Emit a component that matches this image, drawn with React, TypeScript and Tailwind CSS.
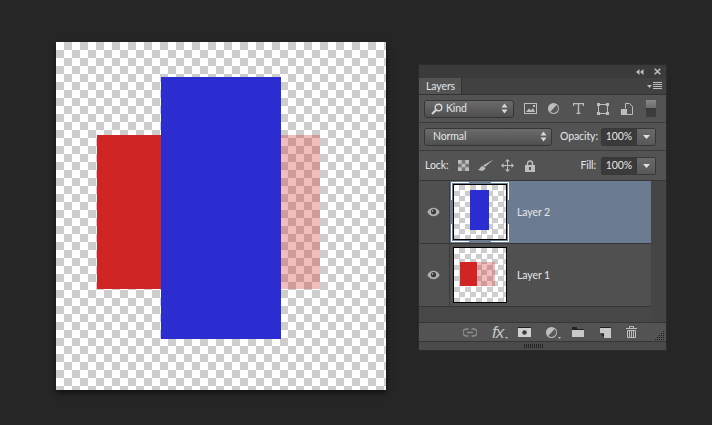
import type { ReactNode } from "react";

const CHECKER =
  "bg-[conic-gradient(#cdcdcd_25%,#ffffff_0_50%,#cdcdcd_0_75%,#ffffff_0)]";
const LABEL = "text-[10.5px] leading-none tracking-[-0.1px] whitespace-nowrap text-[#e4e6e8]";
const SELECT =
  "flex h-[18px] items-center rounded-[3px] border border-[#363636] bg-gradient-to-b from-[#6c6c6c] to-[#4f4f4f]";

function UpDown() {
  return (
    <svg width="7" height="11" viewBox="0 0 7 11" className="shrink-0" aria-hidden="true">
      <path d="M3.5 0.5 6.5 4.5H0.5Z M0.5 6.5H6.5L3.5 10.5Z" fill="#d8d8d8" />
    </svg>
  );
}

function ValueBox({ value }: { value: string }) {
  return (
    <div className="flex h-[18px] w-[55px] rounded-[2px] border border-[#383838]">
      <div className={`flex w-[34px] items-center justify-center bg-[#3a3a3a] ${LABEL}`}>{value}</div>
      <div className="flex flex-1 items-center justify-center border-l border-[#383838] bg-gradient-to-b from-[#6a6a6a] to-[#585858]">
        <svg width="7" height="4" viewBox="0 0 7 4" aria-hidden="true">
          <path d="M0 0H7L3.5 4Z" fill="#e0e0e0" />
        </svg>
      </div>
    </div>
  );
}

function Eye() {
  return (
    <svg width="13" height="10" viewBox="0 0 13 10" aria-hidden="true">
      <path d="M0.3 5C2 2 4 0.7 6.5 0.7S11 2 12.7 5C11 8 9 9.3 6.5 9.3S2 8 0.3 5Z" fill="#b0b0b0" />
      <circle cx="6.5" cy="4.7" r="2.6" fill="#3a3a3a" />
      <circle cx="5.6" cy="3.9" r="0.8" fill="#b0b0b0" />
    </svg>
  );
}

function Thumb({ children }: { children: ReactNode }) {
  return (
    <div className={`relative h-[56px] w-[54px] border border-black ${CHECKER} bg-[length:11px_11px]`}>
      {children}
    </div>
  );
}

function LayerRow({
  name,
  selected,
  children,
}: {
  name: string;
  selected?: boolean;
  children: ReactNode;
}) {
  return (
    <div className="flex h-[63px] border-b border-[#363636]">
      <div className="flex w-[31px] items-center justify-center border-r border-[#3c3c3c] bg-[#505050] pr-[1px]">
        <Eye />
      </div>
      <div className={`flex flex-1 items-center pl-[3px] ${selected ? "bg-[#6b7c92]" : "bg-[#505050]"}`}>
        <div className="relative">
          <Thumb>{children}</Thumb>
          {selected && (
            <svg width="58" height="60" viewBox="0 0 58 60" className="absolute -left-[2px] -top-[2px]" aria-hidden="true">
              <path
                d="M0.5 18V0.5H18 M40 0.5H57.5V18 M57.5 42V59.5H40 M18 59.5H0.5V42"
                fill="none"
                stroke="#ffffff"
              />
            </svg>
          )}
        </div>
        <span className={`ml-[10px] ${LABEL}`}>{name}</span>
      </div>
    </div>
  );
}

const ICON = "#bdbdbd";

export default function App() {
  return (
    <div className="flex h-[425px] w-[712px] items-start overflow-hidden bg-[#262626] pl-[56px] pt-[42px] font-['Lato','Noto_Sans',sans-serif]">
      {/* Document canvas */}
      <div className={`relative h-[348px] w-[330px] shrink-0 shadow-[0_3px_6px_rgba(0,0,0,0.6)] ${CHECKER} bg-[length:16px_16px]`}>
        <div className="absolute left-[41px] top-[93px] h-[154px] w-[64px] bg-[#d12424]" />
        <div className="absolute left-[225px] top-[93px] h-[154px] w-[39px] bg-[#d12424]/30" />
        <div className="absolute left-[105px] top-[35px] h-[262px] w-[120px] bg-[#2b2dd0]" />
      </div>

      {/* Layers panel */}
      <div className="ml-[33px] mt-[23px] flex w-[247px] shrink-0 flex-col bg-[#535353] shadow-[0_0_0_1px_#2c2c2c]">
        <div className="flex h-[13px] items-center justify-end gap-[10px] bg-[#3b3b3b] pr-[5px]">
          <svg width="8" height="6" viewBox="0 0 8 6" aria-hidden="true">
            <path d="M3.5 0V6L0 3Z M7.5 0V6L4 3Z" fill={ICON} />
          </svg>
          <svg width="7" height="7" viewBox="0 0 7 7" aria-hidden="true">
            <path d="M0.7 0.7 6.3 6.3 M6.3 0.7 0.7 6.3" stroke={ICON} strokeWidth="1.6" />
          </svg>
        </div>

        <div className="flex h-[17px] items-stretch border-b border-[#333333] bg-[#414141]">
          <div className={`flex w-[43px] items-center border-r border-[#333333] bg-[#535353] pl-[7px] ${LABEL}`}>
            Layers
          </div>
          <div className="flex flex-1 items-center justify-end pr-[4px]">
            <svg width="15" height="8" viewBox="0 0 15 8" aria-hidden="true">
              <path d="M0 3H5L2.5 6Z" fill={ICON} />
              <path d="M6 0.5H15M6 2.5H15M6 4.5H15M6 6.5H15" stroke={ICON} />
            </svg>
          </div>
        </div>

        {/* Filter row */}
        <div className="flex h-[28px] items-center border-b border-[#3c3c3c] pl-[5px]">
          <div className={`${SELECT} w-[90px] pl-[6px] pr-[5px]`}>
            <svg width="12" height="12" viewBox="0 0 12 12" aria-hidden="true">
              <circle cx="7.5" cy="4.5" r="3.3" fill="none" stroke="#d8d8d8" strokeWidth="1.4" />
              <path d="M5 7 1 11" stroke="#d8d8d8" strokeWidth="2" />
            </svg>
            <span className={`ml-[3px] flex-1 ${LABEL}`}>Kind</span>
            <UpDown />
          </div>
          <svg width="13" height="11" viewBox="0 0 13 11" className="ml-[10px]" aria-hidden="true">
            <rect x="0.5" y="0.5" width="12" height="10" fill="none" stroke={ICON} />
            <path d="M2 9 5 5.5 7 7.5 9 5 11 9Z" fill={ICON} />
            <rect x="9" y="2" width="2" height="2" fill={ICON} />
          </svg>
          <svg width="11" height="11" viewBox="0 0 11 11" className="ml-[11px]" aria-hidden="true">
            <circle cx="5.5" cy="5.5" r="5.5" fill={ICON} />
            <path d="M8.6 2 A4.4 4.4 0 0 1 2.4 8.8Z" fill="#585858" />
          </svg>
          <svg width="11" height="11" viewBox="0 0 11 11" className="ml-[14px]" aria-hidden="true">
            <path d="M0.5 3V0.5H10.5V3 M5.5 0.5V10.5 M3.5 10.5H7.5" fill="none" stroke={ICON} strokeWidth="1.4" />
          </svg>
          <svg width="12" height="12" viewBox="0 0 12 12" className="ml-[13px]" aria-hidden="true">
            <rect x="1.5" y="1.5" width="9" height="9" fill="none" stroke={ICON} />
            <path d="M0 0H3V3H0Z M9 0H12V3H9Z M0 9H3V12H0Z M9 9H12V12H9Z" fill={ICON} />
          </svg>
          <svg width="12" height="12" viewBox="0 0 12 12" className="ml-[12px]" aria-hidden="true">
            <path d="M4.5 5.5V0.5H8.5L11.5 3.5V11.5H6" fill="none" stroke={ICON} />
            <rect x="0" y="6" width="6" height="6" fill={ICON} />
          </svg>
          <div className="ml-[13px] h-[17px] w-[10px] bg-[linear-gradient(#8a8a8a_0,#6a6a6a_50%,#3a3a3a_50%,#3e3e3e_100%)]" />
        </div>

        {/* Blend mode row */}
        <div className="flex h-[28px] items-center border-b border-[#3c3c3c] pl-[5px]">
          <div className={`${SELECT} w-[128px] pl-[8px] pr-[4px]`}>
            <span className={`flex-1 ${LABEL}`}>Normal</span>
            <UpDown />
          </div>
          <span className={`ml-[8px] w-[36px] ${LABEL}`}>Opacity:</span>
          <div className="ml-[5px]">
            <ValueBox value="100%" />
          </div>
        </div>

        {/* Lock row */}
        <div className="flex h-[29px] items-center pl-[6px]">
          <span className={`w-[33px] ${LABEL}`}>Lock:</span>
          <svg width="11" height="11" viewBox="0 0 11 11" aria-hidden="true">
            <rect width="11" height="11" fill={ICON} />
            <path d="M3.7 0H7.3V3.7H3.7Z M0 3.7H3.7V7.3H0Z M7.3 3.7H11V7.3H7.3Z M3.7 7.3H7.3V11H3.7Z" fill="#777777" />
          </svg>
          <svg width="16" height="13" viewBox="0 0 16 13" className="ml-[9px]" aria-hidden="true">
            <path d="M15.5 0.5 7 8 5 6.5Z" fill={ICON} />
            <path d="M4.5 7C2.5 7 2.5 10 0 10.5 2.5 12.5 6 12.5 7.5 9Z" fill={ICON} />
          </svg>
          <svg width="13" height="13" viewBox="0 0 13 13" className="ml-[7px]" aria-hidden="true">
            <path d="M6.5 0 9 2.5H7V6H10.5V4L13 6.5 10.5 9V7H7V10.5H9L6.5 13 4 10.5H6V7H2.5V9L0 6.5 2.5 4V6H6V2.5H4Z" fill={ICON} />
          </svg>
          <svg width="10" height="12" viewBox="0 0 10 12" className="ml-[11px]" aria-hidden="true">
            <path d="M2.5 5.5V3.5A2.5 2.5 0 0 1 7.5 3.5V5.5" fill="none" stroke={ICON} strokeWidth="1.4" />
            <path d="M0 5H10V12H0Z" fill={ICON} />
            <rect x="4" y="7" width="2" height="3" fill="#535353" />
          </svg>
          <span className={`ml-[40px] w-[21px] text-right ${LABEL}`}>Fill:</span>
          <div className="ml-[5px]">
            <ValueBox value="100%" />
          </div>
        </div>

        {/* Layer list */}
        <div className="flex h-[143px] border-y border-[#363636]">
          <div className="flex w-[232px] flex-col bg-[#474747]">
            <LayerRow name="Layer 2" selected>
              <div className="absolute left-[16px] top-[5px] h-[40px] w-[19px] bg-[#2b2dd0]" />
            </LayerRow>
            <LayerRow name="Layer 1">
              <div className="absolute left-[6px] top-[14px] h-[24px] w-[17px] bg-[#d12424]" />
              <div className="absolute left-[23px] top-[14px] h-[24px] w-[18px] bg-[#d12424]/30" />
            </LayerRow>
          </div>
          <div className="flex-1 bg-[#454545]" />
        </div>

        {/* Footer icons */}
        <div className="relative flex h-[19px] items-center border-b border-[#363636] pl-[44px]">
          <svg width="14" height="9" viewBox="0 0 14 9" aria-hidden="true">
            <path d="M5.5 1H3.5A3 3 0 0 0 3.5 8H5.5 M8.5 1H10.5A3 3 0 0 1 10.5 8H8.5 M4 4.5H10" fill="none" stroke="#8f8f8f" strokeWidth="1.5" />
          </svg>
          <span className="ml-[15px] w-[13px] font-['Liberation_Sans',sans-serif] text-[17px] italic leading-none tracking-[-1px] text-[#c4c4c4]">fx</span>
          <svg width="3" height="2" viewBox="0 0 3 2" className="mt-[11px]" aria-hidden="true">
            <path d="M0 0H3L1.5 2Z" fill={ICON} />
          </svg>
          <svg width="13" height="10" viewBox="0 0 13 10" className="ml-[10px]" aria-hidden="true">
            <rect width="13" height="10" fill="#d0d0d0" />
            <rect width="13" height="1" fill="#222222" />
            <circle cx="6.5" cy="5.5" r="2.3" fill="#3c3c3c" />
          </svg>
          <svg width="11" height="11" viewBox="0 0 11 11" className="ml-[15px]" aria-hidden="true">
            <circle cx="5.5" cy="5.5" r="5.5" fill={ICON} />
            <path d="M8.6 2A4.4 4.4 0 0 1 2.4 8.8Z" fill="#585858" />
          </svg>
          <svg width="3" height="2" viewBox="0 0 3 2" className="ml-[1px] mt-[11px]" aria-hidden="true">
            <path d="M0 0H3L1.5 2Z" fill={ICON} />
          </svg>
          <svg width="12" height="10" viewBox="0 0 12 10" className="ml-[11px]" aria-hidden="true">
            <path d="M0 0H5L6 2H12V10H0Z" fill="#c8c8c8" />
            <path d="M0 0H5L6 2H12V3H0Z" fill="#222222" />
          </svg>
          <svg width="11" height="11" viewBox="0 0 11 11" className="ml-[16px]" aria-hidden="true">
            <path d="M0 0H11V11H4V6H0Z" fill="#c8c8c8" />
            <path d="M0 0H11V1H0Z M1 7H4V10Z" fill="#222222" />
          </svg>
          <svg width="11" height="12" viewBox="0 0 11 12" className="ml-[15px]" aria-hidden="true">
            <path d="M0 2.5H11 M3.5 2V0.5H7.5V2" fill="none" stroke={ICON} />
            <path d="M1.5 4.5H9.5V11.5H1.5Z" fill="none" stroke={ICON} />
            <path d="M3.5 5V11 M5.5 5V11 M7.5 5V11" stroke={ICON} />
          </svg>
          <svg width="11" height="11" viewBox="0 0 11 11" className="absolute bottom-[0px] right-[1px]" aria-hidden="true">
            <path
              d="M9 1h1v1H9z M7 3h1v1H7z M9 3h1v1H9z M5 5h1v1H5z M7 5h1v1H7z M9 5h1v1H9z M3 7h1v1H3z M5 7h1v1H5z M7 7h1v1H7z M9 7h1v1H9z M1 9h1v1H1z M3 9h1v1H3z M5 9h1v1H5z M7 9h1v1H7z M9 9h1v1H9z"
              fill="#1f1f1f"
            />
          </svg>
        </div>

        {/* Grip strip */}
        <div className="flex h-[8px] items-center justify-center bg-[#4a4a4a] pr-[18px]">
          <div className="h-[4px] w-[19px] bg-[repeating-linear-gradient(90deg,#262626_0,#262626_1px,transparent_1px,transparent_2px)]" />
        </div>
      </div>
    </div>
  );
}
